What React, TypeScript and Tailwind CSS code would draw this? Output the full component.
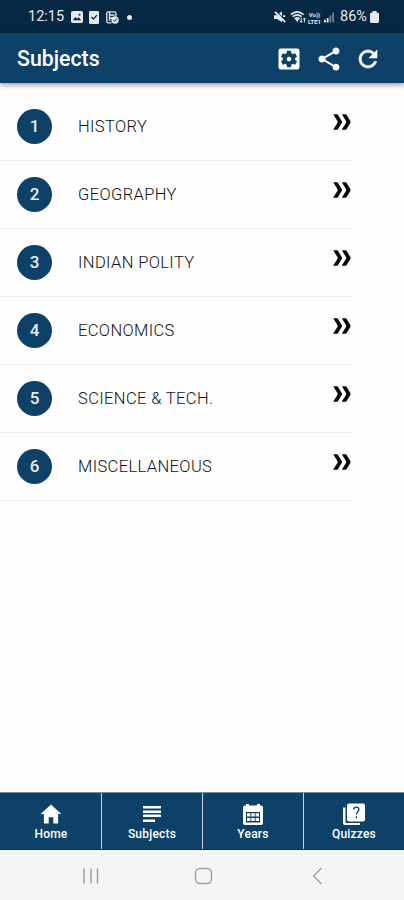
import type { ReactNode } from "react";
import { IoMdRefresh, IoMdShare } from "react-icons/io";
import { MdSettingsApplications } from "react-icons/md";

const subjects = [
  "HISTORY",
  "GEOGRAPHY",
  "INDIAN POLITY",
  "ECONOMICS",
  "SCIENCE & TECH.",
  "MISCELLANEOUS",
];

function StatusBar() {
  return (
    <div className="flex h-[33px] shrink-0 items-center bg-[#062842] pl-[28px] pr-[25px] pt-px text-[#e3e9ee]">
      <span className="w-[43px] whitespace-nowrap pt-px text-[14.5px] leading-none">12:15</span>
      <svg className="h-[12px] w-[12px]" viewBox="0 0 12 12">
        <rect width="12" height="12" rx="1.8" fill="currentColor" />
        <path d="M1.8 9.3 4.4 6l1.8 1.7 1.5-1.4 2.5 3z" fill="#062842" />
        <circle cx="8.5" cy="3.7" r="1" fill="#062842" />
      </svg>
      <svg className="ml-[6px] h-[13px] w-[10px]" viewBox="0 0 10 13">
        <rect width="10" height="13" rx="1.3" fill="currentColor" />
        <path d="m2.5 6 2 2.1 3.4-4" fill="none" stroke="#062842" strokeWidth="1.3" />
      </svg>
      <svg className="ml-[7px] h-[13px] w-[13px]" viewBox="0 0 13 13">
        <path
          d="M5.5 11.8H2.2A1.4 1.4 0 0 1 .8 10.4V2.2A1.4 1.4 0 0 1 2.2.8h6.3a1.4 1.4 0 0 1 1.4 1.4v3M3.5 1v9M3.5 4h5M3.5 7h3"
          fill="none"
          stroke="currentColor"
          strokeWidth="1.3"
        />
        <circle cx="9" cy="9" r="3.7" fill="currentColor" />
        <path d="m7.3 9 1.3 1.3 2.4-2.8" fill="none" stroke="#062842" />
      </svg>
      <span className="ml-[8px] h-[5px] w-[5px] rounded-full bg-[#e3e9ee]" />

      <div className="ml-auto flex items-center">
        <svg className="h-[12px] w-[12px]" viewBox="0 0 12 12">
          <path d="M0 4.2h3L8 .3v11L3 8H0z" fill="currentColor" />
          <path d="m2.2.4 9.6 9.6" stroke="#062842" strokeWidth="1.1" />
          <path d="m1 .8 10.3 10.3M9 5.2h2.2" stroke="currentColor" strokeWidth="1.8" />
        </svg>
        <svg className="ml-[4px] h-[14px] w-[17px]" viewBox="0 0 17 14" fill="none" stroke="currentColor">
          <path d="M.8 4.6q6.2-5.5 12.8 0M2.8 6.7q4.4-3.8 8.8 0M4.8 8.8q2.4-2 4.8 0" strokeWidth="1.6" />
          <path d="m5.2 9 2 3.2 2-3.2z" fill="currentColor" stroke="none" />
          <path d="M11.2 7.8v4.5m-1.3-1.4 1.3 1.5 1.3-1.5M14.4 12.5V8m-1.3 1.4L14.4 8l1.3 1.4" strokeWidth="1" />
        </svg>
        <div className="flex w-[15px] flex-col items-center pt-px text-[6px] font-bold leading-[7px]">
          <span>Vo))</span>
          <span>LTE1</span>
        </div>
        <svg className="ml-[2px] h-[11px] w-[10px]" viewBox="0 0 11 11">
          <path d="M0 8h2v3H0zM3 6h2v5H3z" fill="currentColor" />
          <path d="M6 3h2v8H6zM9 0h2v11H9z" fill="currentColor" opacity=".45" />
        </svg>
        <span className="ml-[6px] w-[30px] whitespace-nowrap pt-px text-[14.5px] leading-none">86%</span>
        <svg className="h-[12px] w-[9px]" viewBox="0 0 9 12">
          <path d="M2.5 0h4v1.5h1A1.5 1.5 0 0 1 9 3v7.5A1.5 1.5 0 0 1 7.5 12h-6A1.5 1.5 0 0 1 0 10.5V3a1.5 1.5 0 0 1 1.5-1.5h1z" fill="currentColor" />
        </svg>
      </div>
    </div>
  );
}

function SubjectRow({ number, title }: { number: number; title: string }) {
  return (
    <li className="flex h-[68px] w-[352px] items-center border-b border-[#efefef] pl-[17px]">
      <span className="flex h-[35px] w-[35px] items-center justify-center rounded-full bg-[#0d4168] text-[17px] font-medium text-[#e6eef6]">
        {number}
      </span>
      <span className="ml-[26px] pt-px text-[16.5px] font-light tracking-[0.38px] text-[#111]">{title}</span>
      <svg className="mb-[9px] ml-auto mr-px h-[16px] w-[18px]" viewBox="0 0 18 16" fill="#080808">
        <path d="M1 .3h3q.7 0 1.1.7l3.6 6q.6 1 0 2L5.1 15q-.4.7-1.1.7H.8q-.7 0-.3-.7l3.9-6q.6-1 0-2L.6 1Q.2.3 1 .3z" />
        <path d="M9.6.3h3q.7 0 1.1.7l3.6 6q.6 1 0 2l-3.6 6q-.4.7-1.1.7H9.4q-.7 0-.3-.7l3.9-6q.6-1 0-2L9.2 1Q8.8.3 9.6.3z" />
      </svg>
    </li>
  );
}

function NavItem({ label, children }: { label: string; children: ReactNode }) {
  return (
    <a className="flex flex-1 flex-col items-center border-r border-[#c4d0da] pt-[9px] last:border-r-0">
      <svg className="h-[24px] w-[24px]" viewBox="0 0 24 24" fill="currentColor">
        {children}
      </svg>
      <span className="mt-px text-[12px] font-medium leading-[14px] tracking-[0.2px]">{label}</span>
    </a>
  );
}

export default function App() {
  return (
    <div className="flex h-[900px] w-[404px] flex-col overflow-hidden bg-[#fefefe] font-['Roboto',sans-serif]">
      <StatusBar />

      {/* App bar */}
      <header className="flex h-[50px] shrink-0 items-center bg-[#0d4168] pl-[17px] pr-[23px] text-white shadow-[0_2px_5px_rgba(0,0,0,0.4)]">
        <h1 className="pt-px text-[21.3px] font-medium">Subjects</h1>
        <div className="ml-auto flex items-center gap-[12px] pt-px">
          <MdSettingsApplications size={28} />
          <IoMdShare size={28} />
          <IoMdRefresh size={26} stroke="currentColor" strokeWidth={14} />
        </div>
      </header>

      <main className="flex-1 pt-[10px]">
        <ul>
          {subjects.map((title, i) => (
            <SubjectRow key={title} number={i + 1} title={title} />
          ))}
        </ul>
      </main>

      {/* Bottom tabs */}
      <nav className="flex h-[58px] shrink-0 border-y border-t-[#6f8ca5] border-b-[#06345b] bg-[#0d4168] pl-px text-white">
        <NavItem label="Home">
          <path d="M9.7 21.5v-6.3h4.6v6.3h4.8v-9.4h3.2L12 2.5 1.7 12.1h3.2v9.4z" />
        </NavItem>
        <NavItem label="Subjects">
          <path d="M3 4h18v2.5H3zM3 8.5h18V11H3zM3 12.5h18V15H3zM3 17.5h12V20H3z" />
        </NavItem>
        <NavItem label="Years">
          <path
            fillRule="evenodd"
            d="M4 3.5h1V2h3v1.5h8V2h3v1.5h1q2 0 2 2V21q0 2-2 2H4q-2 0-2-2V5.5q0-2 2-2M5 10v10.5h14V10z"
          />
          <path d="M6 11.3h3.4v3.1H6zm4.3 0h3.4v3.1h-3.4zm4.3 0H18v3.1h-3.4zM6 16h3.4v3H6zm4.3 0h3.4v3h-3.4zm4.3 0H18v3h-3.4z" />
        </NavItem>
        <NavItem label="Quizzes">
          <path d="M1 5.5h2.5V21H18v2H3q-2 0-2-2z" />
          <rect x="5" y="1.5" width="18" height="18" rx="2" />
          <path d="M11.7 7.5q0-2.300 2.600-2.300t2.600 2.300c0 1.900-2.500 2.400-2.500 5M14.400 14.200v2" fill="none" stroke="#0d4168" strokeWidth="1.3" />
        </NavItem>
      </nav>

      {/* Android navigation */}
      <div className="flex h-[50px] shrink-0 items-center bg-[#f5f5f5] pl-[82px] text-[#a0a0a0]">
        <svg className="mt-[2px] h-[16px] w-[18px]" viewBox="0 0 18 16">
          <path d="M2 .5v15M9 .5v15M15.5 .5v15" stroke="currentColor" strokeWidth="1.5" />
        </svg>
        <svg className="ml-[94px] mt-[2px] h-[18px] w-[19px]" viewBox="0 0 19 18">
          <rect x="1.5" y="1.5" width="16" height="15" rx="4.5" fill="none" stroke="currentColor" strokeWidth="1.4" />
        </svg>
        <svg className="ml-[99px] mt-[2px] h-[18px] w-[11px]" viewBox="0 0 11 18">
          <path d="M9.5 1 1.5 9l8 8" fill="none" stroke="currentColor" strokeWidth="1.4" />
        </svg>
      </div>
    </div>
  );
}
